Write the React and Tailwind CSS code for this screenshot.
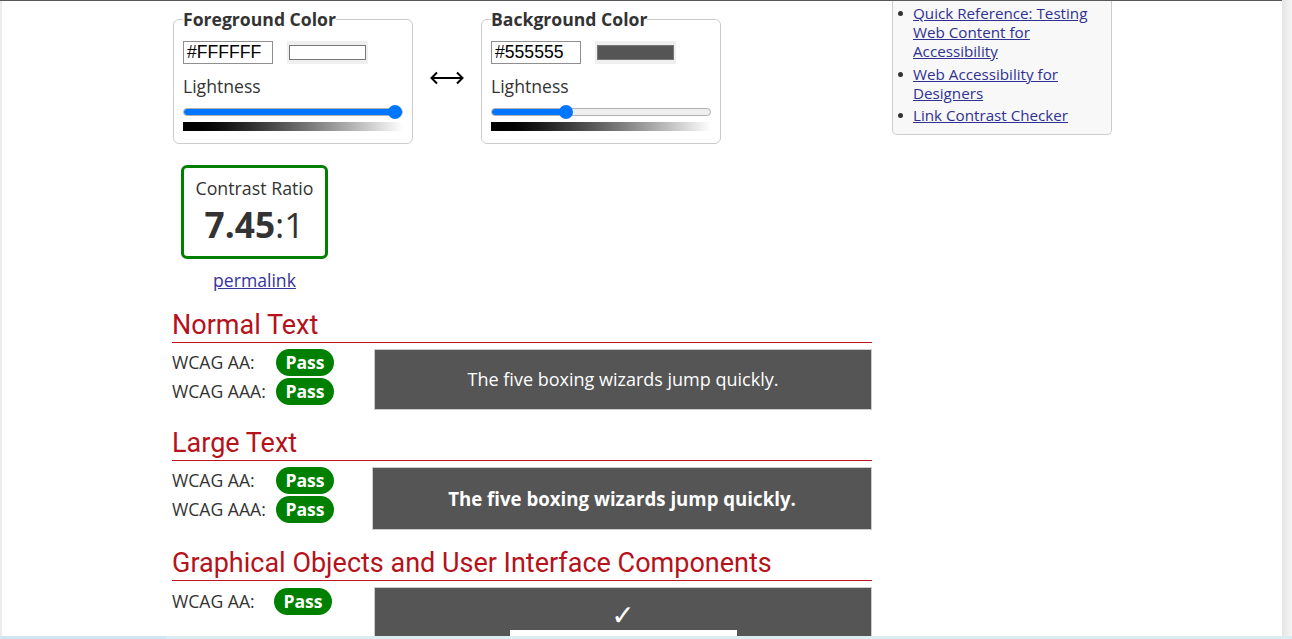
import React from "react";

function ColorField({ legend, hex, color, pct }) {
  return (
    <fieldset className="w-[240px] h-[136px] border border-[#cccccc] rounded-[6px] px-[9px] pb-[11px] pt-[10px] m-0 min-w-0">
      <legend className="p-0 text-[17.6px] leading-[23px] font-bold text-[#333333]">{legend}</legend>
      <div className="flex items-center">
        <div className="w-[90px] h-[23px] border border-[#8f8f8f] bg-white pl-[3px] flex items-center font-['Liberation_Sans',Arial,sans-serif] text-[17.6px] text-black leading-none">
          {hex}
        </div>
        <div className="ml-[14px] w-[81px] h-[23px] bg-[#efefef] px-[2px] py-[4px]">
          <div className="w-full h-full border border-[#777777]" style={{ background: color }} />
        </div>
      </div>
      <div className="mt-[10px] text-[17.6px] leading-[24px] text-[#333333]">Lightness</div>
      <div className="mt-[6px] relative h-[16px] flex items-center">
        <div className="relative w-full h-[8px] rounded-full bg-[#efefef] border border-[#b2b2b2] overflow-hidden">
          <div className="absolute left-0 top-[-1px] h-[8px] bg-[#0075ff] rounded-full" style={{ width: pct === 100 ? "100%" : pct + "px" }} />
        </div>
        <div
          className="absolute top-[1px] w-[14px] h-[14px] rounded-full bg-[#0075ff]"
          style={{ left: pct === 100 ? "205px" : pct - 7 + "px" }}
        />
      </div>
      <div className="mt-[2px] h-[9px] w-full bg-gradient-to-r from-black to-white" />
    </fieldset>
  );
}

function Badge() {
  return (
    <div className="w-[58px] h-[27px] rounded-full bg-[#008000] text-white font-bold text-[17.6px] leading-none flex items-center justify-center">
      Pass
    </div>
  );
}

function Heading({ children, className = "" }) {
  return (
    <div className={className}>
      <h2 className="font-['Roboto',sans-serif] font-normal text-[27px] leading-[32px] text-[#b5121b]">{children}</h2>
      <div className="mt-[1px] h-0 border-t border-[#c0141e]" />
    </div>
  );
}

function Row({ label, labelW = "w-[104px]" }) {
  return (
    <div className="flex items-center h-[27px]">
      <div className={labelW + " text-[17.6px] text-[#333333] leading-none"}>{label}</div>
      <Badge />
    </div>
  );
}

function SideLink({ children, className = "" }) {
  return (
    <li className={"flex " + className}>
      <span className="mt-[7px] w-[5px] h-[5px] rounded-full bg-[#333333] shrink-0" />
      <a href="#" className="ml-[10px] text-[#2e3192] underline">
        {children}
      </a>
    </li>
  );
}

export default function App() {
  return (
    <div className="w-[1292px] h-[639px] overflow-hidden bg-white flex flex-col font-['Open_Sans','Noto_Sans',sans-serif] text-[#333333]">
      <div className="flex-1 min-h-0 flex">
        <div className="flex-1 min-w-0 flex flex-col border-t border-[#5a5a5a]">
          <div className="flex-1 min-h-0 flex overflow-hidden">
            <div className="w-[2px] bg-[#ececec]" />
            <div className="pl-[170px] flex">
              {/* main column */}
              <div className="w-[700px]">
                <div className="mt-[7px] ml-[1px] flex items-start">
                  <ColorField legend="Foreground Color" hex="#FFFFFF" color="#ffffff" pct={100} />
                  <div className="mx-[17px] mt-[63px]">
                    <svg width="34" height="14" viewBox="0 0 34 14">
                      <line x1="2" y1="7" x2="32" y2="7" stroke="black" strokeWidth="2" />
                      <polyline points="7,1.5 1.5,7 7,12.5" fill="none" stroke="black" strokeWidth="2" />
                      <polyline points="27,1.5 32.5,7 27,12.5" fill="none" stroke="black" strokeWidth="2" />
                    </svg>
                  </div>
                  <ColorField legend="Background Color" hex="#555555" color="#555555" pct={75} />
                </div>

                <div className="mt-[21px] ml-[9px] w-[147px] flex flex-col items-center">
                  <div className="w-[147px] h-[94px] border-[3px] border-[#008000] rounded-[6px] flex flex-col items-center pt-[8px]">
                    <div className="text-[17.8px] leading-[24px] text-[#333333]">Contrast Ratio</div>
                    <div className="mt-[4px] text-[35.2px] leading-[40px] text-[#333333]">
                      <span className="font-bold">7.45</span>:1
                    </div>
                  </div>
                  <a href="#" className="mt-[9px] text-[17.6px] leading-[24px] text-[#34349a] underline">
                    permalink
                  </a>
                </div>

                <Heading className="mt-[17px]">Normal Text</Heading>
                <div className="mt-[6px] flex">
                  <div className="w-[202px] flex flex-col gap-[2px]">
                    <Row label="WCAG AA:" />
                    <Row label="WCAG AAA:" />
                  </div>
                  <div className="flex-1 h-[61px] bg-[#555555] border border-[#cccccc] flex items-center justify-center text-white text-[18px]">
                    The five boxing wizards jump quickly.
                  </div>
                </div>

                <Heading className="mt-[17px]">Large Text</Heading>
                <div className="mt-[6px] flex">
                  <div className="w-[200px] flex flex-col gap-[2px]">
                    <Row label="WCAG AA:" />
                    <Row label="WCAG AAA:" />
                  </div>
                  <div className="flex-1 h-[63px] bg-[#555555] border border-[#cccccc] flex items-center justify-center text-white text-[18.67px] font-bold">
                    The five boxing wizards jump quickly.
                  </div>
                </div>

                <Heading className="mt-[17px]">Graphical Objects and User Interface Components</Heading>
                <div className="mt-[6px] flex">
                  <div className="w-[202px] flex flex-col">
                    <div className="flex items-center h-[27px] mt-[1px]">
                      <div className="w-[102px] text-[17.6px] text-[#333333] leading-none">WCAG AA:</div>
                      <Badge />
                    </div>
                  </div>
                  <div className="flex-1 h-[80px] bg-[#555555] border border-[#cccccc] flex flex-col items-center pt-[15px]">
                    <div className="text-white text-[28px] leading-[26px] font-['DejaVu_Sans',sans-serif]">✓</div>
                    <div className="mt-[1px] w-[227px] h-[30px] bg-white" />
                  </div>
                </div>
              </div>

              {/* sidebar */}
              <div className="ml-[20px] w-[220px] self-start">
                <div className="bg-[#f8f8f8] border border-t-0 border-[#cccccc] rounded-b-[5px] pl-[5px] pr-[10px] pt-[3px] pb-[9px]">
                  <ul className="text-[15.2px] leading-[19px]">
                    <SideLink>Quick Reference: Testing Web Content for Accessibility</SideLink>
                    <SideLink className="mt-[4px]">Web Accessibility for Designers</SideLink>
                    <SideLink className="mt-[3px]">Link Contrast Checker</SideLink>
                  </ul>
                </div>
              </div>
            </div>
          </div>
        </div>
        <div className="w-[10px] bg-gradient-to-r from-[#e4e4e4] to-[#f6f6f6]" />
      </div>
      <div className="h-[3px] flex">
        <div className="w-[166px] bg-[#d2e6ef]" />
        <div className="flex-1 bg-[#dbecf3]" />
      </div>
    </div>
  );
}
